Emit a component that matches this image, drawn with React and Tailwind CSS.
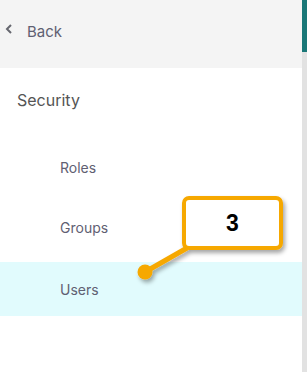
import React from "react";

export default function App() {
  const font = { fontFamily: "Inter, 'Noto Sans', sans-serif" };
  return (
    <div className="relative flex w-[307px] h-[372px] bg-white overflow-hidden" style={font}>
      <div className="w-[302px] h-full flex flex-col bg-white">
        <div className="h-[68px] bg-[#f4f4f4] flex items-center pl-[5px] pb-[6px] text-[#5f6072]">
          <svg width="8" height="10" viewBox="0 0 8 10" className="mb-[5px]">
            <path d="M6 1 L2 5 L6 9" fill="none" stroke="#66676f" strokeWidth="2" />
          </svg>
          <span className="ml-[14px] text-[15px] leading-none">Back</span>
        </div>
        <div className="h-[64px] flex items-center pl-[17px] text-[16px] text-[#555555]">Security</div>
        <div className="mt-[8px] h-[54px] flex items-center pl-[60px] text-[14px] text-[#5f6072]">Roles</div>
        <div className="mt-[6px] h-[54px] flex items-center pl-[60px] text-[14px] text-[#5f6072]">Groups</div>
        <div className="mt-[8px] h-[54px] flex items-center pl-[60px] text-[14px] text-[#5f6072] bg-[#e1fbfd]">Users</div>
      </div>
      <div className="w-[5px] h-full flex flex-col">
        <div className="h-[52px] bg-[#1a7878]" />
        <div className="flex-1 bg-[#e2e2e2]" />
      </div>

      <svg className="absolute left-0 top-0 pointer-events-none" width="307" height="372">
        <defs>
          <filter id="sh" x="-20%" y="-20%" width="140%" height="140%">
            <feDropShadow dx="2" dy="3" stdDeviation="2" floodColor="#000" floodOpacity="0.35" />
          </filter>
        </defs>
        <g filter="url(#sh)">
          <line x1="187" y1="248" x2="145" y2="272" stroke="#f6a800" strokeWidth="5" />
          <circle cx="145" cy="272" r="7.5" fill="#f6a800" />
          <rect x="184" y="198" width="97" height="50" rx="5" fill="#ffffff" stroke="#f6a800" strokeWidth="4" />
        </g>
      </svg>
      <div
        className="absolute left-[184px] top-[198px] w-[97px] h-[50px] flex items-center justify-center text-[23px] font-bold text-black"
        style={{ fontFamily: "'Liberation Sans', Arial, sans-serif" }}
      >
        3
      </div>
    </div>
  );
}
